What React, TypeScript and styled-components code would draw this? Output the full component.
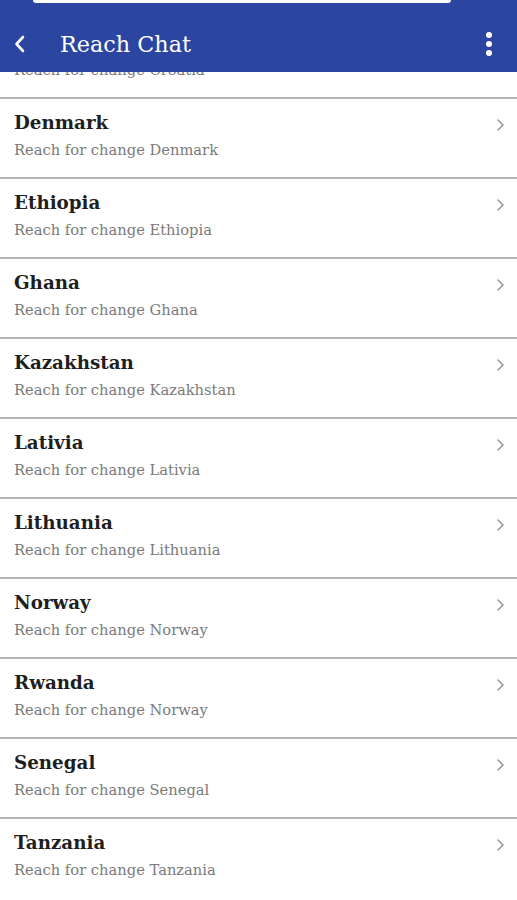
import styled, { createGlobalStyle } from "styled-components";

const GlobalStyle = createGlobalStyle`
  html, body {
    margin: 0;
    padding: 0;
    background: #ffffff;
    font-family: "DejaVu Serif", "Liberation Serif", serif;
  }
`;

const Screen = styled.div`
  position: relative;
  width: 517px;
  height: 900px;
  overflow: hidden;
  background: #ffffff;
`;

const AppBar = styled.header`
  position: absolute;
  top: 0;
  left: 0;
  right: 0;
  height: 72px;
  background: #2b45a1;
  display: flex;
  align-items: center;
  padding: 16px 16px 0 8px;
  box-sizing: border-box;
  z-index: 2;
`;

const TopSheet = styled.div`
  position: absolute;
  top: 0;
  left: 33px;
  width: 418px;
  height: 3px;
  background: #ffffff;
  border-radius: 0 0 3px 3px;
`;

const IconButton = styled.button`
  background: none;
  border: 0;
  padding: 0;
  width: 24px;
  height: 32px;
  display: flex;
  align-items: center;
  justify-content: center;
  color: #ffffff;
`;

const Title = styled.h1`
  flex: 1;
  margin: 0 0 0 28px;
  font-size: 22.3px;
  font-weight: 400;
  color: #ffffff;
`;

const List = styled.ul`
  list-style: none;
  margin: 0;
  padding: 19px 0 0;
`;

const Row = styled.li`
  height: 78px;
  border-bottom: 2px solid #b4b4b4;
  display: flex;
  align-items: flex-start;
  padding: 0 14px;

  &:last-child {
    border-bottom-color: transparent;
  }
`;

const RowText = styled.div`
  flex: 1;
  display: flex;
  flex-direction: column;
`;

const Country = styled.div`
  margin-top: 13px;
  height: 24px;
  font-size: 18.3px;
  font-weight: 700;
  color: #1e1e1e;
`;

const Tagline = styled.div`
  margin-top: 5px;
  font-size: 14.7px;
  color: #7a7a7a;
`;

const Chevron = styled.div`
  margin-top: 18px;
  margin-right: -2px;
  color: #9a9a9a;
`;

const rows = [
  { name: "Croatia", tag: "Reach for change Croatia" },
  { name: "Denmark", tag: "Reach for change Denmark" },
  { name: "Ethiopia", tag: "Reach for change Ethiopia" },
  { name: "Ghana", tag: "Reach for change Ghana" },
  { name: "Kazakhstan", tag: "Reach for change Kazakhstan" },
  { name: "Lativia", tag: "Reach for change Lativia" },
  { name: "Lithuania", tag: "Reach for change Lithuania" },
  { name: "Norway", tag: "Reach for change Norway" },
  { name: "Rwanda", tag: "Reach for change Norway" },
  { name: "Senegal", tag: "Reach for change Senegal" },
  { name: "Tanzania", tag: "Reach for change Tanzania" },
];

const App = () => {
  return (
    <Screen>
      <GlobalStyle />
      <AppBar>
        <TopSheet />
        <IconButton aria-label="back">
          <svg width="14" height="18" viewBox="0 0 14 18">
            <path d="M10 2 L3.5 9 L10 16" fill="none" stroke="#fff" strokeWidth="2.6" strokeLinecap="round" strokeLinejoin="round" />
          </svg>
        </IconButton>
        <Title>Reach Chat</Title>
        <IconButton aria-label="more">
          <svg width="8" height="28" viewBox="0 0 8 28">
            <circle cx="4" cy="5" r="3" fill="#fff" />
            <circle cx="4" cy="14" r="3" fill="#fff" />
            <circle cx="4" cy="23" r="3" fill="#fff" />
          </svg>
        </IconButton>
      </AppBar>
      <List>
        {rows.map((r) => (
          <Row key={r.name}>
            <RowText>
              <Country>{r.name}</Country>
              <Tagline>{r.tag}</Tagline>
            </RowText>
            <Chevron>
              <svg width="10" height="16" viewBox="0 0 10 16">
                <path d="M3 3 L8 8 L3 13" fill="none" stroke="currentColor" strokeWidth="1.6" strokeLinecap="round" strokeLinejoin="round" />
              </svg>
            </Chevron>
          </Row>
        ))}
      </List>
    </Screen>
  );
};

export default App;
